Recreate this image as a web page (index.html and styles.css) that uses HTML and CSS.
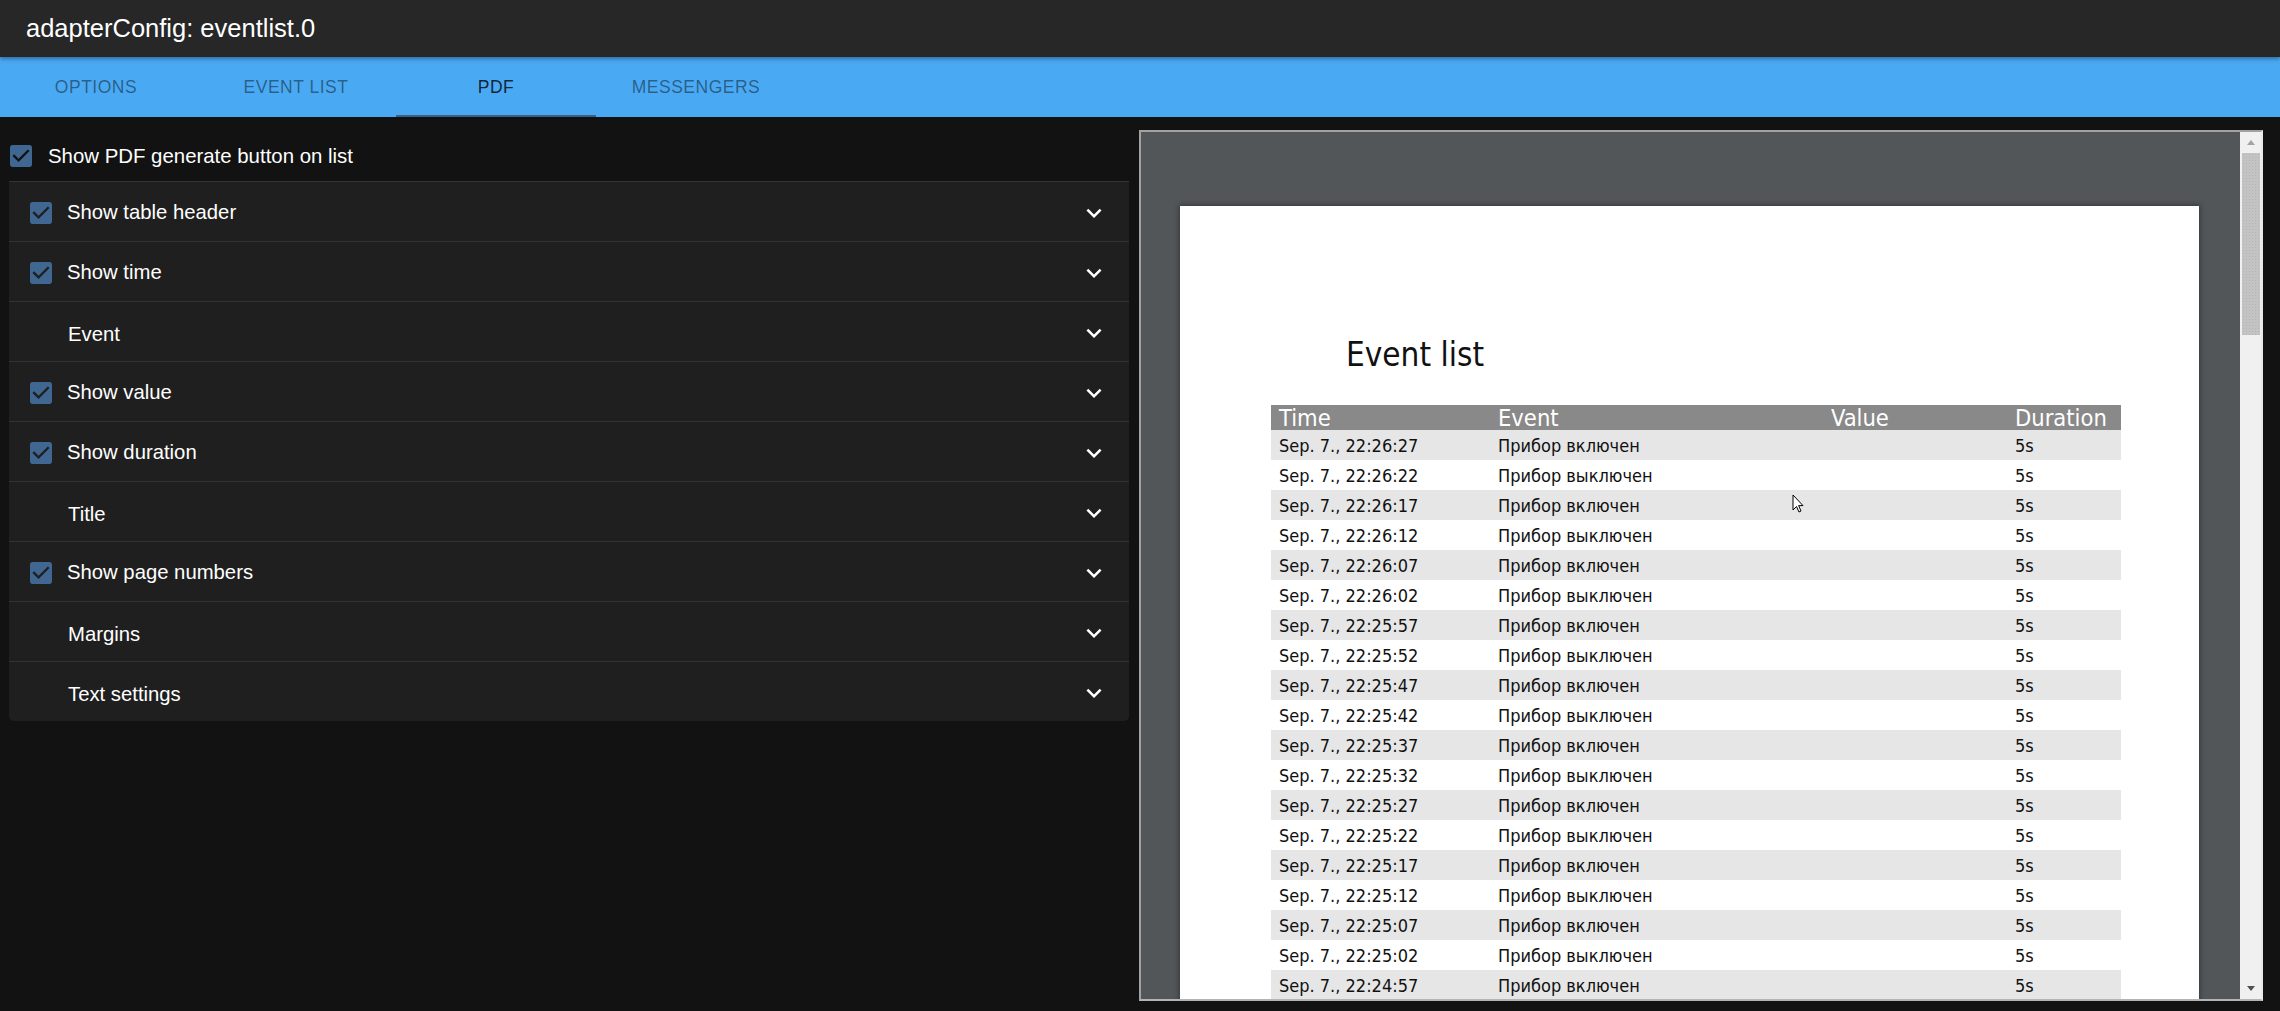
FILE: index.html
```html
<!DOCTYPE html>
<html lang="en">
<head>
<meta charset="utf-8">
<title>adapterConfig: eventlist.0</title>
<link rel="stylesheet" href="styles.css">
</head>
<body>
<header class="appbar">adapterConfig: eventlist.0</header>
<nav class="tabs">
  <div class="tab">Options</div>
  <div class="tab">Event list</div>
  <div class="tab tab-active">PDF</div>
  <div class="tab">Messengers</div>
</nav>
<main class="content">
  <section class="settings">
    <div class="top-row">
      <svg class="cb" viewBox="3 3 18 18"><path d="M19 3H5c-1.11 0-2 .9-2 2v14c0 1.1.89 2 2 2h14c1.11 0 2-.9 2-2V5c0-1.1-.89-2-2-2zm-9 14l-5-5 1.41-1.410L10 14.17l7.59-7.59L19 8l-9 9z"/></svg>
      <span>Show PDF generate button on list</span>
    </div>
    <div class="panel">
      <div class="row"><div class="row-label"><svg class="cb" viewBox="3 3 18 18"><path d="M19 3H5c-1.11 0-2 .9-2 2v14c0 1.1.89 2 2 2h14c1.11 0 2-.9 2-2V5c0-1.1-.89-2-2-2zm-9 14l-5-5 1.41-1.41L10 14.17l7.59-7.59L19 8l-9 9z"/></svg><span>Show table header</span></div><svg class="chev" viewBox="0 0 24 24"><path d="M16.59 8.59L12 13.17 7.41 8.59 6 10l6 6 6-6z"/></svg></div>
      <div class="row"><div class="row-label"><svg class="cb" viewBox="3 3 18 18"><path d="M19 3H5c-1.11 0-2 .9-2 2v14c0 1.1.89 2 2 2h14c1.11 0 2-.9 2-2V5c0-1.1-.89-2-2-2zm-9 14l-5-5 1.41-1.41L10 14.17l7.59-7.59L19 8l-9 9z"/></svg><span>Show time</span></div><svg class="chev" viewBox="0 0 24 24"><path d="M16.59 8.59L12 13.17 7.41 8.59 6 10l6 6 6-6z"/></svg></div>
      <div class="row"><div class="row-label plain"><span>Event</span></div><svg class="chev" viewBox="0 0 24 24"><path d="M16.59 8.59L12 13.17 7.41 8.59 6 10l6 6 6-6z"/></svg></div>
      <div class="row"><div class="row-label"><svg class="cb" viewBox="3 3 18 18"><path d="M19 3H5c-1.11 0-2 .9-2 2v14c0 1.1.89 2 2 2h14c1.11 0 2-.9 2-2V5c0-1.1-.89-2-2-2zm-9 14l-5-5 1.41-1.41L10 14.17l7.59-7.59L19 8l-9 9z"/></svg><span>Show value</span></div><svg class="chev" viewBox="0 0 24 24"><path d="M16.59 8.59L12 13.17 7.41 8.59 6 10l6 6 6-6z"/></svg></div>
      <div class="row"><div class="row-label"><svg class="cb" viewBox="3 3 18 18"><path d="M19 3H5c-1.11 0-2 .9-2 2v14c0 1.1.89 2 2 2h14c1.11 0 2-.9 2-2V5c0-1.1-.89-2-2-2zm-9 14l-5-5 1.41-1.41L10 14.17l7.59-7.59L19 8l-9 9z"/></svg><span>Show duration</span></div><svg class="chev" viewBox="0 0 24 24"><path d="M16.59 8.59L12 13.17 7.41 8.59 6 10l6 6 6-6z"/></svg></div>
      <div class="row"><div class="row-label plain"><span>Title</span></div><svg class="chev" viewBox="0 0 24 24"><path d="M16.59 8.59L12 13.17 7.41 8.59 6 10l6 6 6-6z"/></svg></div>
      <div class="row"><div class="row-label"><svg class="cb" viewBox="3 3 18 18"><path d="M19 3H5c-1.11 0-2 .9-2 2v14c0 1.1.89 2 2 2h14c1.11 0 2-.9 2-2V5c0-1.1-.89-2-2-2zm-9 14l-5-5 1.41-1.41L10 14.17l7.59-7.59L19 8l-9 9z"/></svg><span>Show page numbers</span></div><svg class="chev" viewBox="0 0 24 24"><path d="M16.59 8.59L12 13.17 7.41 8.59 6 10l6 6 6-6z"/></svg></div>
      <div class="row"><div class="row-label plain"><span>Margins</span></div><svg class="chev" viewBox="0 0 24 24"><path d="M16.59 8.59L12 13.17 7.41 8.59 6 10l6 6 6-6z"/></svg></div>
      <div class="row"><div class="row-label plain"><span>Text settings</span></div><svg class="chev" viewBox="0 0 24 24"><path d="M16.59 8.59L12 13.17 7.41 8.59 6 10l6 6 6-6z"/></svg></div>
    </div>
  </section>
  <section class="preview">
    <div class="viewer">
      <div class="canvas">
        <div class="page">
          <div class="doc-title">Event list</div>
          <div class="doc-table">
            <div class="tr th"><span>Time</span><span>Event</span><span>Value</span><span>Duration</span></div>
            <div class="tr"><span>Sep. 7., 22:26:27</span><span>Прибор включен</span><span></span><span>5s</span></div>
            <div class="tr"><span>Sep. 7., 22:26:22</span><span>Прибор выключен</span><span></span><span>5s</span></div>
            <div class="tr"><span>Sep. 7., 22:26:17</span><span>Прибор включен</span><span></span><span>5s</span></div>
            <div class="tr"><span>Sep. 7., 22:26:12</span><span>Прибор выключен</span><span></span><span>5s</span></div>
            <div class="tr"><span>Sep. 7., 22:26:07</span><span>Прибор включен</span><span></span><span>5s</span></div>
            <div class="tr"><span>Sep. 7., 22:26:02</span><span>Прибор выключен</span><span></span><span>5s</span></div>
            <div class="tr"><span>Sep. 7., 22:25:57</span><span>Прибор включен</span><span></span><span>5s</span></div>
            <div class="tr"><span>Sep. 7., 22:25:52</span><span>Прибор выключен</span><span></span><span>5s</span></div>
            <div class="tr"><span>Sep. 7., 22:25:47</span><span>Прибор включен</span><span></span><span>5s</span></div>
            <div class="tr"><span>Sep. 7., 22:25:42</span><span>Прибор выключен</span><span></span><span>5s</span></div>
            <div class="tr"><span>Sep. 7., 22:25:37</span><span>Прибор включен</span><span></span><span>5s</span></div>
            <div class="tr"><span>Sep. 7., 22:25:32</span><span>Прибор выключен</span><span></span><span>5s</span></div>
            <div class="tr"><span>Sep. 7., 22:25:27</span><span>Прибор включен</span><span></span><span>5s</span></div>
            <div class="tr"><span>Sep. 7., 22:25:22</span><span>Прибор выключен</span><span></span><span>5s</span></div>
            <div class="tr"><span>Sep. 7., 22:25:17</span><span>Прибор включен</span><span></span><span>5s</span></div>
            <div class="tr"><span>Sep. 7., 22:25:12</span><span>Прибор выключен</span><span></span><span>5s</span></div>
            <div class="tr"><span>Sep. 7., 22:25:07</span><span>Прибор включен</span><span></span><span>5s</span></div>
            <div class="tr"><span>Sep. 7., 22:25:02</span><span>Прибор выключен</span><span></span><span>5s</span></div>
            <div class="tr"><span>Sep. 7., 22:24:57</span><span>Прибор включен</span><span></span><span>5s</span></div>
          </div>
        </div>
      </div>
      <div class="scrollbar">
        <div class="sb-btn"><span class="tri-up"></span></div>
        <div class="sb-track"><div class="sb-thumb"></div></div>
        <div class="sb-btn"><span class="tri-down"></span></div>
      </div>
    </div>
    <svg class="cursor" viewBox="0 0 12 19"><path d="M1 1 L1 16 L4.5 12.5 L7 18 L9 17 L6.6 11.6 L11 11.6 Z" fill="#fff" stroke="#000" stroke-width="1"/></svg>
  </section>
</main>
</body>
</html>
```
FILE: styles.css
```css
* { box-sizing: border-box; }
html, body { margin: 0; padding: 0; }
body {
  width: 2280px;
  height: 1011px;
  overflow: hidden;
  background: #121212;
  color: #fff;
  font-family: "Liberation Sans", Arial, sans-serif;
}
.appbar {
  position: relative;
  z-index: 2;
  height: 57px;
  line-height: 57px;
  padding-left: 26px;
  font-size: 25.5px;
  background: #272727;
  box-shadow: 0 2px 4px rgba(0,0,0,0.35);
}
.tabs {
  display: flex;
  height: 60px;
  background: #4aa9f3;
}
.tabs .tab:first-child { margin-left: -4px; }
.tab {
  width: 200px;
  height: 60px;
  display: flex;
  align-items: center;
  justify-content: center;
  font-size: 17.5px;
  letter-spacing: 0.5px;
  text-transform: uppercase;
  color: rgba(0,0,0,0.45);
}
.tab-active {
  color: rgba(0,0,0,0.8);
  box-shadow: inset 0 -2px 0 #3f5f82;
}
.content {
  display: flex;
  align-items: flex-start;
}
.settings {
  width: 1120px;
  margin-left: 9px;
}
.top-row {
  display: flex;
  align-items: center;
  gap: 16px;
  height: 46px;
  margin-top: 16px;
  padding-left: 1px;
  font-size: 20.4px;
}
.cb {
  width: 22px;
  height: 22px;
  flex: none;
  fill: #3f6792;
}
.panel {
  margin-top: 2px;
  background: #1f1f1f;
  border-radius: 0 0 5px 5px;
}
.row {
  height: 60px;
  border-top: 1px solid #333;
  display: flex;
  align-items: center;
  justify-content: space-between;
  padding: 2px 20px 0 21px;
  font-size: 20.3px;
}
.row-label {
  display: flex;
  align-items: center;
  gap: 15px;
}
.row-label.plain { padding: 4px 0 0 38px; }
.chev {
  width: 30px;
  height: 30px;
  fill: #fff;
}
.preview {
  position: relative;
  margin-left: 10px;
  margin-top: 13px;
}
.viewer {
  width: 1124px;
  height: 871px;
  display: flex;
  border-top: 2px solid #a2a2a2;
  border-left: 2px solid #a2a2a2;
  border-right: 2px solid #e9e9e9;
  border-bottom: 2px solid #b4b4b4;
  background: #525659;
}
.canvas {
  flex: 1;
  overflow: hidden;
  padding: 74px 0 0 39px;
}
.page {
  width: 1019px;
  height: 1200px;
  background: #fff;
  box-shadow: 0 0 5px 1px rgba(0,0,0,0.35);
  padding-top: 131px;
  padding-left: 91px;
  color: #111;
  font-family: "DejaVu Sans Condensed", "DejaVu Sans", sans-serif;
  font-stretch: condensed;
}
.doc-title {
  margin-left: 75px;
  font-size: 33px;
  line-height: 36px;
  height: 36px;
}
.doc-table {
  margin-top: 32px;
  width: 850px;
}
.tr {
  display: grid;
  grid-template-columns: 219px 333px 184px 1fr;
  height: 30px;
  line-height: 32px;
  font-size: 18px;
  padding-left: 8px;
  white-space: nowrap;
}
.tr:nth-child(even) { background: #e6e6e6; }
.tr.th {
  height: 25px;
  line-height: 26px;
  font-size: 23.5px;
  background: #898989;
  color: #fff;
}
.scrollbar {
  width: 21px;
  display: flex;
  flex-direction: column;
  background: #f0f0f0;
  padding: 0 1px 0 2px;
}
.sb-btn {
  height: 21px;
  display: flex;
  align-items: center;
  justify-content: center;
}
.tri-up, .tri-down {
  width: 0;
  height: 0;
  border-left: 4px solid transparent;
  border-right: 4px solid transparent;
}
.tri-up { border-bottom: 5px solid #a3a3a3; }
.tri-down { border-top: 5px solid #505050; }
.sb-track {
  flex: 1;
}
.sb-thumb {
  height: 182px;
  background-color: #c3c3c3;
  background-image: radial-gradient(#b5b5b5 0.6px, transparent 0.8px);
  background-size: 3px 3px;
}
.cursor {
  position: absolute;
  left: 653px;
  top: 364px;
  width: 12px;
  height: 19px;
}
```
